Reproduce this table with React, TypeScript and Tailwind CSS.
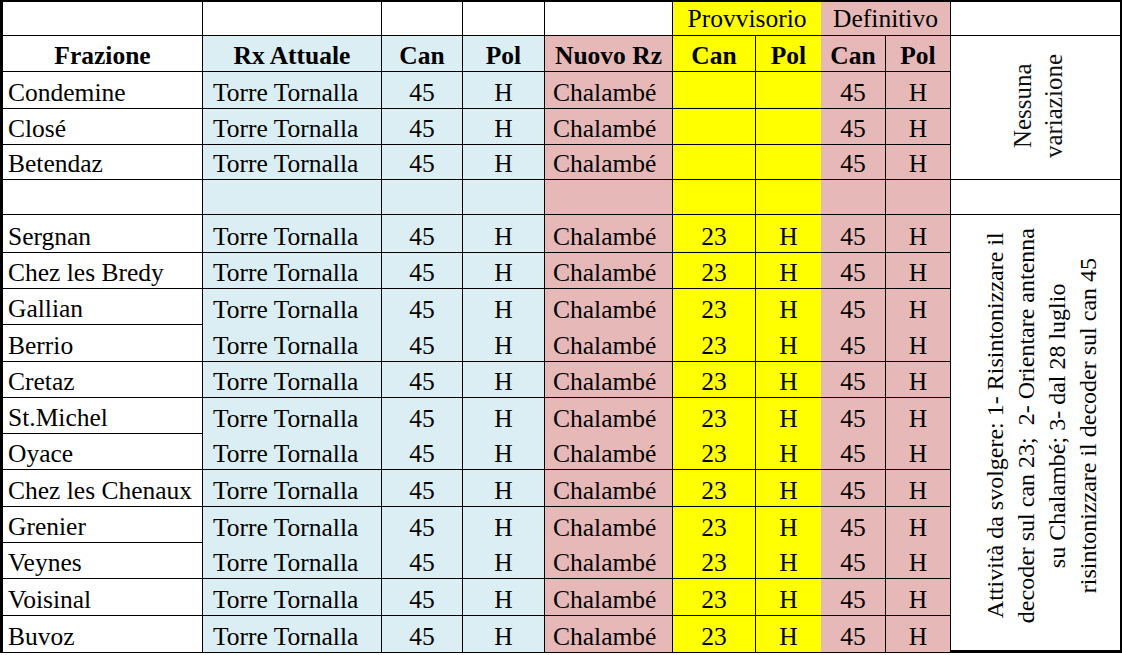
import React from "react";

const BLUE = "bg-[#daeef3]";
const PINK = "bg-[#e6b8b7]";
const YELLOW = "bg-[#ffff00]";
const WHITE = "bg-white";

type ColSpec = { bg: string; justify: string };

// data columns (notes column handled separately)
const COLS: ColSpec[] = [
  { bg: WHITE, justify: "justify-start pl-[5px]" },
  { bg: BLUE, justify: "justify-start pl-[10px]" },
  { bg: BLUE, justify: "justify-center" },
  { bg: BLUE, justify: "justify-center" },
  { bg: PINK, justify: "justify-start pl-[8px]" },
  { bg: YELLOW, justify: "justify-center" },
  { bg: YELLOW, justify: "justify-center" },
  { bg: PINK, justify: "justify-center" },
  { bg: PINK, justify: "justify-center" },
];

type Row = { name: string; provv: boolean; gapBelow?: boolean } | null;

const ROWS: Row[] = [
  { name: "Condemine", provv: false },
  { name: "Closé", provv: false },
  { name: "Betendaz", provv: false },
  null,
  { name: "Sergnan", provv: true },
  { name: "Chez les Bredy", provv: true },
  { name: "Gallian", provv: true, gapBelow: true },
  { name: "Berrio", provv: true },
  { name: "Cretaz", provv: true },
  { name: "St.Michel", provv: true, gapBelow: true },
  { name: "Oyace", provv: true },
  { name: "Chez les Chenaux", provv: true },
  { name: "Grenier", provv: true, gapBelow: true },
  { name: "Veynes", provv: true },
  { name: "Voisinal", provv: true },
  { name: "Buvoz", provv: true },
];

function Cell({
  col,
  children,
  noBottom,
  bold,
  justify,
  bg,
}: {
  col: number;
  children?: React.ReactNode;
  noBottom?: boolean;
  bold?: boolean;
  justify?: string;
  bg?: string;
}) {
  const spec = COLS[col];
  return (
    <div
      className={[
        "flex items-end pb-[3px] leading-none whitespace-nowrap border-black",
        noBottom ? "" : "border-b",
        col === 6 ? "" : "border-r",
        col === 0 ? "border-l-[3px]" : "",
        bold ? "font-bold" : "",
        bg ?? spec.bg,
        justify ?? spec.justify,
      ].join(" ")}
    >
      {children}
    </div>
  );
}

function Vertical({ children, className }: { children: React.ReactNode; className?: string }) {
  return (
    <div className={"[writing-mode:vertical-rl] rotate-180 text-center whitespace-nowrap leading-[31px] " + (className ?? "")}>
      {children}
    </div>
  );
}

export default function App() {
  return (
    <div className="w-[1122px] h-[655px] bg-white text-black [font-family:'Liberation_Serif','Times_New_Roman',serif] text-[25.5px]">
      <div className="grid grid-cols-[203px_179px_81px_82px_128px_83px_65px_65px_65px_171px] grid-rows-[36px_36px_37px_36px_35px_35px_38px_36px_36px_37px_36px_36px_36px_37px_36px_36px_37px_37px]">
        {/* top row */}
        <div className="border-l-[3px] border-t-2 border-r border-b border-black bg-white" />
        <div className="border-t-2 border-r border-b border-black bg-white" />
        <div className="border-t-2 border-r border-b border-black bg-white" />
        <div className="border-t-2 border-r border-b border-black bg-white" />
        <div className="border-t-2 border-r border-b border-black bg-white" />
        <div className="col-span-2 flex items-end justify-center pb-[4px] leading-none border-t-2 border-b border-black bg-[#ffff00]">
          Provvisorio
        </div>
        <div className="col-span-2 flex items-end justify-center pb-[4px] leading-none border-t-2 border-r border-b border-black bg-[#e6b8b7]">
          Definitivo
        </div>
        <div className="border-t-2 border-r-2 border-b border-black bg-white" />

        {/* header row */}
        <Cell col={0} bold justify="justify-center">Frazione</Cell>
        <Cell col={1} bold justify="justify-center">Rx Attuale</Cell>
        <Cell col={2} bold>Can</Cell>
        <Cell col={3} bold>Pol</Cell>
        <Cell col={4} bold justify="justify-center">Nuovo Rz</Cell>
        <Cell col={5} bold>Can</Cell>
        <Cell col={6} bold>Pol</Cell>
        <Cell col={7} bold>Can</Cell>
        <Cell col={8} bold>Pol</Cell>
        <div className="row-span-4 flex items-center justify-center border-r-2 border-b border-black bg-white text-[#111]">
          <Vertical className="text-[25px] mb-[2px] ml-[4px]">
            Nessuna
            <br />
            variazione
          </Vertical>
        </div>

        {ROWS.map((r, i) => {
          if (!r) {
            return (
              <React.Fragment key={i}>
                {COLS.map((_, c) => (
                  <Cell key={c} col={c} />
                ))}
                <div className="border-r-2 border-b border-black bg-white" />
              </React.Fragment>
            );
          }
          const gap = !!r.gapBelow;
          return (
            <React.Fragment key={i}>
              <Cell col={0}>{r.name}</Cell>
              <Cell col={1} noBottom={gap}>Torre Tornalla</Cell>
              <Cell col={2} noBottom={gap}>45</Cell>
              <Cell col={3} noBottom={gap}>H</Cell>
              <Cell col={4} noBottom={gap}>Chalambé</Cell>
              <Cell col={5} noBottom={gap}>{r.provv ? "23" : ""}</Cell>
              <Cell col={6} noBottom={gap}>{r.provv ? "H" : ""}</Cell>
              <Cell col={7} noBottom={gap}>45</Cell>
              <Cell col={8} noBottom={gap}>H</Cell>
              {r.name === "Sergnan" && (
                <div className="row-span-12 flex items-center justify-center border-r-2 border-b-[3px] border-black bg-white">
                  <Vertical className="text-[24px] mb-[14px] ml-[12px]">
                    Attività da svolgere: 1- Risintonizzare il
                    <br />
                    decoder sul can 23;{"\u00a0"} 2- Orientare antenna
                    <br />
                    su Chalambé; 3- dal 28 luglio
                    <br />
                    risintonizzare il decoder sul can 45
                  </Vertical>
                </div>
              )}
            </React.Fragment>
          );
        })}
      </div>
    </div>
  );
}
